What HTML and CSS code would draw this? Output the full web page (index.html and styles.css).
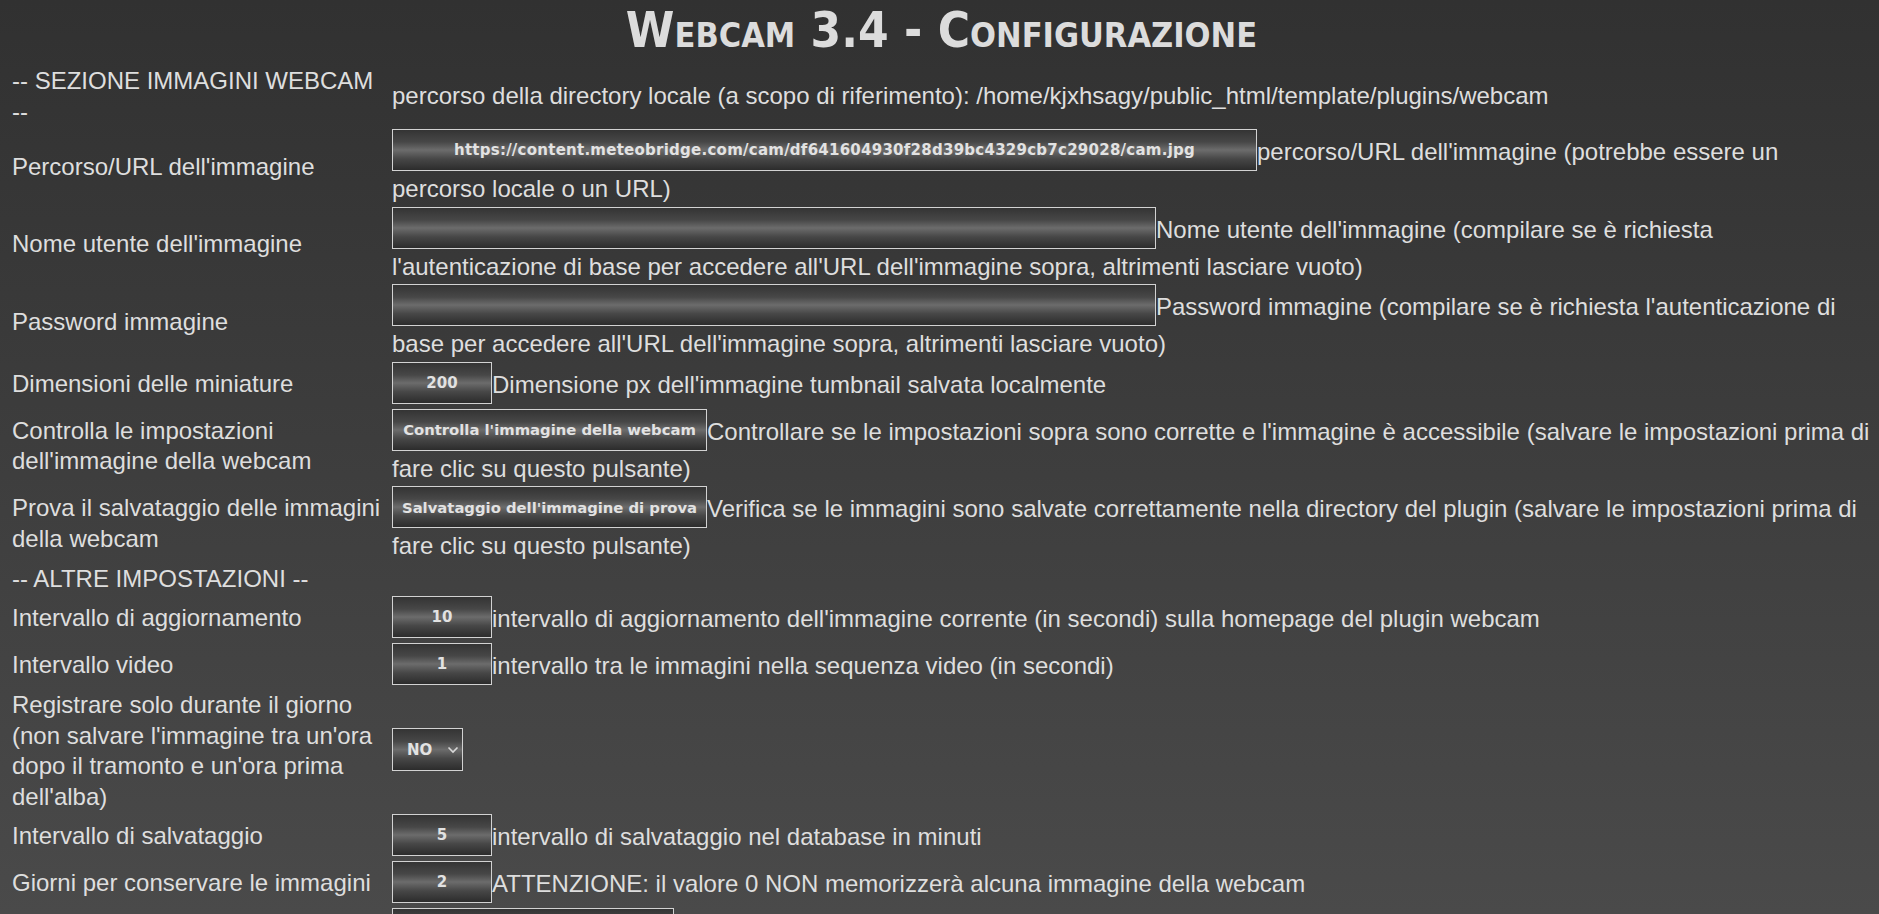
FILE: index.html
```html
<!DOCTYPE html>
<html lang="it">
<head>
<meta charset="utf-8">
<title>Webcam 3.4 - Configurazione</title>
<link rel="stylesheet" href="styles.css">
</head>
<body>
<h1 class="title">Webcam 3.4 - Configurazione</h1>
<table class="config">
  <tr>
    <td class="lbl">-- SEZIONE IMMAGINI WEBCAM --</td>
    <td class="val">percorso della directory locale (a scopo di riferimento): /home/kjxhsagy/public_html/template/plugins/webcam</td>
  </tr>
  <tr>
    <td class="lbl">Percorso/URL dell'immagine</td>
    <td class="val"><input class="fld fld-url" type="text" value="https://content.meteobridge.com/cam/df641604930f28d39bc4329cb7c29028/cam.jpg">percorso/URL dell'immagine (potrebbe essere un percorso locale o un URL)</td>
  </tr>
  <tr>
    <td class="lbl">Nome utente dell'immagine</td>
    <td class="val"><input class="fld fld-wide" type="text" value="">Nome utente dell'immagine (compilare se è richiesta l'autenticazione di base per accedere all'URL dell'immagine sopra, altrimenti lasciare vuoto)</td>
  </tr>
  <tr>
    <td class="lbl">Password immagine</td>
    <td class="val"><input class="fld fld-wide" type="password" value="">Password immagine (compilare se è richiesta l'autenticazione di base per accedere all'URL dell'immagine sopra, altrimenti lasciare vuoto)</td>
  </tr>
  <tr>
    <td class="lbl">Dimensioni delle miniature</td>
    <td class="val"><input class="fld fld-small" type="text" value="200">Dimensione px dell'immagine tumbnail salvata localmente</td>
  </tr>
  <tr>
    <td class="lbl">Controlla le impostazioni dell'immagine della webcam</td>
    <td class="val"><button class="fld btn" type="button">Controlla l'immagine della webcam</button>Controllare se le impostazioni sopra sono corrette e l'immagine è accessibile (salvare le impostazioni prima di fare clic su questo pulsante)</td>
  </tr>
  <tr>
    <td class="lbl">Prova il salvataggio delle immagini della webcam</td>
    <td class="val"><button class="fld btn" type="button">Salvataggio dell'immagine di prova</button>Verifica se le immagini sono salvate correttamente nella directory del plugin (salvare le impostazioni prima di fare clic su questo pulsante)</td>
  </tr>
  <tr>
    <td class="lbl">-- ALTRE IMPOSTAZIONI --</td>
    <td class="val"></td>
  </tr>
  <tr>
    <td class="lbl">Intervallo di aggiornamento</td>
    <td class="val"><input class="fld fld-small" type="text" value="10">intervallo di aggiornamento dell'immagine corrente (in secondi) sulla homepage del plugin webcam</td>
  </tr>
  <tr>
    <td class="lbl">Intervallo video</td>
    <td class="val"><input class="fld fld-small" type="text" value="1">intervallo tra le immagini nella sequenza video (in secondi)</td>
  </tr>
  <tr>
    <td class="lbl">Registrare solo durante il giorno (non salvare l'immagine tra un'ora dopo il tramonto e un'ora prima dell'alba)</td>
    <td class="val"><span class="sel-wrap"><select class="fld sel"><option>NO</option><option>SI</option></select><svg class="chev" width="12" height="8" viewBox="0 0 12 8"><polyline points="1.5,1.5 6,6 10.5,1.5" fill="none" stroke="#d8d8d8" stroke-width="1.6"/></svg></span></td>
  </tr>
  <tr>
    <td class="lbl">Intervallo di salvataggio</td>
    <td class="val"><input class="fld fld-small" type="text" value="5">intervallo di salvataggio nel database in minuti</td>
  </tr>
  <tr>
    <td class="lbl">Giorni per conservare le immagini</td>
    <td class="val"><input class="fld fld-small" type="text" value="2">ATTENZIONE: il valore 0 NON memorizzerà alcuna immagine della webcam</td>
  </tr>
  <tr>
    <td class="lbl"></td>
    <td class="val"><input class="fld fld-mid" type="text" value=""></td>
  </tr>
</table>
</body>
</html>
```
FILE: styles.css
```css
html {
  background: linear-gradient(to bottom, #313131 0px, #4a4a4a 914px);
  background-color: #4a4a4a;
}

body {
  margin: 8px 4px 8px 8px;
  color: #dedede;
  font-family: "Liberation Sans", Arial, sans-serif;
  font-size: 24px;
  line-height: 30.5px;
}

.title {
  margin: 0 0 10px;
  font-family: "DejaVu Sans Condensed", "DejaVu Sans", sans-serif;
  font-stretch: condensed;
  font-weight: bold;
  font-variant: small-caps;
  font-size: 49px;
  line-height: 46px;
  text-align: center;
  color: #dcdcdc;
}

.config {
  width: 100%;
  table-layout: fixed;
  border-collapse: separate;
  border-spacing: 2px;
}

.config td {
  padding: 0 2px;
  vertical-align: middle;
}

.config td.lbl {
  width: 378px;
  box-sizing: border-box;
}

.config td.val {
  padding-right: 0;
}

.fld {
  box-sizing: border-box;
  height: 42px;
  margin: 0 0 3px;
  vertical-align: 4.5px;
  padding: 0;
  border: 1px solid #d2d2d2;
  border-radius: 0;
  color: #e2e2e2;
  font-family: "DejaVu Sans", Verdana, sans-serif;
  font-weight: bold;
  font-size: 15px;
  text-align: center;
  background: linear-gradient(to bottom, #343434 0%, #474747 30%, #6c6c6c 50%, #474747 72%, #2c2c2c 100%);
  outline: none;
}

.fld-url {
  width: 865px;
  letter-spacing: 0.25px;
}
.fld-wide { width: 764px; }
.fld-small { width: 100px; }
.fld-mid { width: 282px; }

.btn {
  width: 315px;
  padding: 0;
  font-size: 14.8px;
  cursor: pointer;
}

.sel-wrap {
  position: relative;
  display: inline-block;
}

.sel {
  -webkit-appearance: none;
  appearance: none;
  width: 71px;
  height: 43px;
  padding: 0 0 0 14px;
  text-align: left;
}

.chev {
  position: absolute;
  right: 4px;
  top: 18px;
  pointer-events: none;
}
```
